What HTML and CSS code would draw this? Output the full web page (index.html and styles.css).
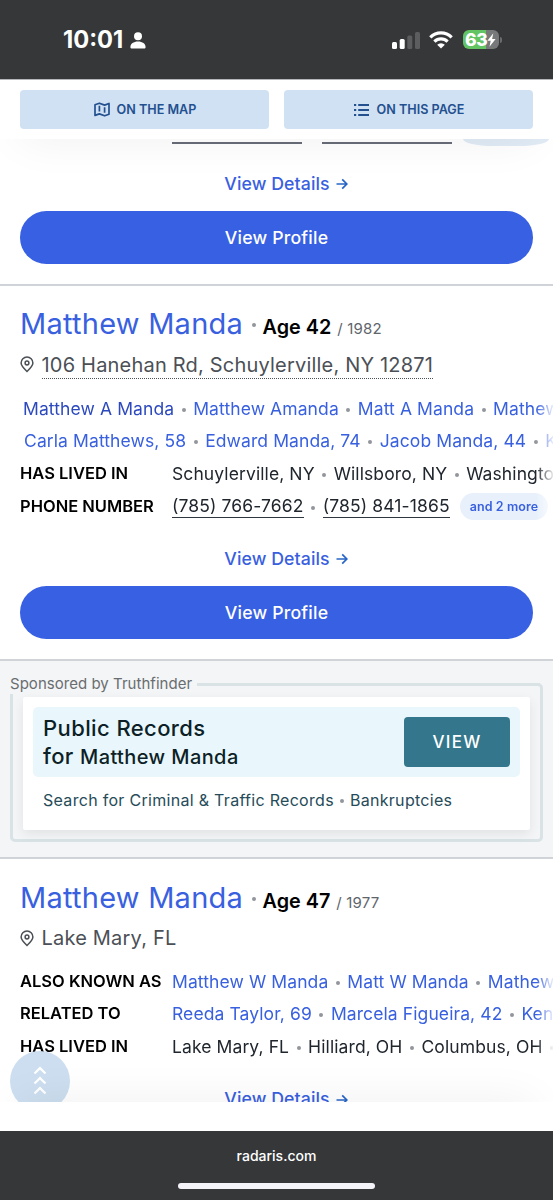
FILE: index.html
```html
<!DOCTYPE html>
<html lang="en">
<head>
<meta charset="utf-8">
<title>Radaris</title>
<link rel="stylesheet" href="styles.css">
</head>
<body>
<svg class="defs" width="0" height="0">
  <symbol id="pin" viewBox="0 0 14 17"><path d="M7 1.100a5.900 5.900 0 0 1 5.900 5.900c0 2.600-1.600 4.400-5.900 8.500C2.700 11.400 1.100 9.600 1.100 7A5.900 5.900 0 0 1 7 1.100Z" fill="none" stroke="currentColor" stroke-width="1.500"/><circle cx="7" cy="7" r="1.900" fill="none" stroke="currentColor" stroke-width="1.500"/></symbol>
  <symbol id="arrow" viewBox="0 0 12 12"><path d="M.5 6h10M6.200 1.400 10.800 6l-4.600 4.600" fill="none" stroke="currentColor" stroke-width="1.700"/></symbol>
</svg>
<header class="status">
  <span class="time">10:01</span>
  <svg class="person" width="16" height="17" viewBox="0 0 16 17"><circle cx="8" cy="4.300" r="4" fill="#fff"/><path d="M.4 15.200C.4 11.800 3.600 9.600 8 9.600s7.600 2.200 7.600 5.600c0 .9-.6 1.300-1.500 1.300H1.900c-.9 0-1.500-.4-1.500-1.300Z" fill="#fff"/></svg>
  <svg class="signal" width="28" height="18" viewBox="0 0 28 18"><rect x="0" y="11" width="5" height="7" rx="1.500" fill="#fff"/><rect x="7.700" y="8" width="5" height="10" rx="1.500" fill="#fff"/><rect x="15.300" y="4.500" width="5" height="13.500" rx="1.500" fill="#5c5d5f"/><rect x="23" y="1" width="5" height="17" rx="1.500" fill="#5c5d5f"/></svg>
  <svg class="wifi" width="24" height="18" viewBox="0 0 24 18"><g fill="none" stroke="#fff" stroke-width="3.200"><path d="M1.300 6.300a15.200 15.200 0 0 1 21.400 0"/><path d="M5.400 10.600a9.400 9.400 0 0 1 13.200 0"/></g><path d="M12 17.600 8.200 13.700a5.400 5.400 0 0 1 7.600 0Z" fill="#fff"/></svg>
  <div class="battery"><span>63</span><svg width="9" height="14" viewBox="0 0 9 14"><path d="M6.300.3.4 7.800h3.300L2.500 13.700 8.600 6H5.100Z" fill="#fff"/></svg></div>
  <i class="cap"></i>
</header>
<nav class="tabs">
  <a class="tab"><svg width="16" height="15" viewBox="0 0 16 15"><path d="M1 2.700 5.400 1.200l5.200 1.900L15 1.500v10.800l-4.400 1.500-5.200-1.900L1 13.400ZM5.400 3.700v5.700M10.600 5.300v5.500" fill="none" stroke="currentColor" stroke-width="1.700" stroke-linejoin="round"/></svg>ON THE MAP</a>
  <a class="tab list"><svg width="15" height="12" viewBox="0 0 15 12"><path d="M0 1h2.200M0 6h2.200M0 11h2.200M4.200 1H15M4.200 6H15M4.200 11H15" stroke="currentColor" stroke-width="1.800"/></svg>ON THIS PAGE</a>
</nav>
<main class="results">
  <section class="card">
    <div class="cut"><i class="line"></i><i class="line"></i><i class="blob"></i></div>
    <a class="details">View Details<svg width="12" height="12"><use href="#arrow"/></svg></a>
    <a class="profile">View Profile</a>
  </section>
  <section class="card">
    <h2 class="name">Matthew Manda<i class="dot"></i><b>Age 42</b><small>/ 1982</small></h2>
    <div class="place"><svg width="14" height="17"><use href="#pin"/></svg><span class="street">106 Hanehan Rd, Schuylerville, NY 12871</span></div>
    <div class="rows">
      <div class="row aliases link"><span class="visited">Matthew A Manda</span><i class="dot"></i><span>Matthew Amanda</span><i class="dot"></i><span>Matt A Manda</span><i class="dot"></i><span>Mathew</span></div>
      <div class="row aliases relatives link"><span>Carla Matthews, 58</span><i class="dot"></i><span>Edward Manda, 74</span><i class="dot"></i><span>Jacob Manda, 44</span><i class="dot"></i><span>K</span></div>
      <div class="row"><label>HAS LIVED IN</label><span>Schuylerville, NY</span><i class="dot"></i><span>Willsboro, NY</span><i class="dot"></i><span>Washington</span></div>
      <div class="row"><label>PHONE NUMBER</label><span class="phone">(785) 766-7662</span><i class="dot"></i><span class="phone">(785) 841-1865</span><span class="more">and 2 more</span></div>
    </div>
    <a class="details">View Details<svg width="12" height="12"><use href="#arrow"/></svg></a>
    <a class="profile">View Profile</a>
  </section>
  <aside class="sponsor">
    <fieldset>
      <legend>Sponsored by Truthfinder</legend>
      <div class="ad">
        <div class="banner"><p>Public Records<br>for <em>Matthew Manda</em></p><a class="view">VIEW</a></div>
        <div class="tags"><span>Search for Criminal &amp; Traffic Records</span><i class="dot"></i><span>Bankruptcies</span></div>
      </div>
    </fieldset>
  </aside>
  <section class="card">
    <h2 class="name">Matthew Manda<i class="dot"></i><b>Age 47</b><small>/ 1977</small></h2>
    <div class="place"><svg width="14" height="17"><use href="#pin"/></svg><span>Lake Mary, FL</span></div>
    <div class="rows">
      <div class="row link"><label>ALSO KNOWN AS</label><span>Matthew W Manda</span><i class="dot"></i><span>Matt W Manda</span><i class="dot"></i><span>Mathew</span></div>
      <div class="row link"><label>RELATED TO</label><span>Reeda Taylor, 69</span><i class="dot"></i><span>Marcela Figueira, 42</span><i class="dot"></i><span>Ken</span></div>
      <div class="row"><label>HAS LIVED IN</label><span>Lake Mary, FL</span><i class="dot"></i><span>Hilliard, OH</span><i class="dot"></i><span>Columbus, OH</span><i class="dot"></i></div>
    </div>
    <a class="details">View Details<svg width="12" height="12"><use href="#arrow"/></svg></a>
  </section>
  <a class="to-top"><svg width="14" height="30" viewBox="0 0 14 30"><path d="M1.500 7.500 7 2.200l5.500 5.300M1.500 17.500 7 12.200l5.500 5.300M1.500 27.500 7 22.200l5.500 5.300" fill="none" stroke="#fff" stroke-width="2.300"/></svg></a>
</main>
<div class="gap"></div>
<footer class="browser"><span>radaris.com</span><i class="home"></i></footer>
</body>
</html>
```
FILE: styles.css
```css
* { box-sizing: border-box; }
body { margin: 0; width: 553px; height: 1200px; overflow: hidden; display: flex; flex-direction: column; background: #fff; font-family: Inter, "Liberation Sans", sans-serif; color: #20262d; }
.defs { position: absolute; }
svg { display: block; flex: none; }
i { font-style: normal; }

.status { height: 80px; flex: none; display: flex; align-items: center; background: #363739; border-bottom: 1px solid #b4b6ba; padding: 0 51px 0 63px; color: #fff; }
.time { font-size: 23.700px; font-weight: 700; line-height: 30px; width: 67px; white-space: nowrap; margin-top: 1px; }
.person { margin-top: 1px; }
.signal { margin-left: auto; }
.wifi { margin: 0 10px 0 9px; }
.battery { width: 36px; height: 19px; display: flex; align-items: center; padding-left: 2px; border-radius: 6px; background: linear-gradient(90deg, #62c462 64%, #77787a 64%); font-weight: 800; font-size: 17.500px; letter-spacing: -.3px; }
.cap { width: 2px; height: 6px; margin-left: 1px; border-radius: 0 2px 2px 0; background: #6b6c6e; }

.tabs { height: 59px; flex: none; display: flex; gap: 15px; padding: 10px 20px; background: #fff; position: relative; z-index: 2; }
.tab { width: 249px; display: flex; align-items: center; justify-content: center; gap: 7px; padding-left: 1px; border-radius: 4px; background: #d0e1f3; color: #23508f; font-size: 12.600px; font-weight: 600; }
.tab.list { gap: 8px; }

.results { height: 963px; flex: none; overflow: hidden; position: relative; }
.results::before, .results::after { content: ""; position: absolute; z-index: 3; left: 20px; right: 20px; height: 40px; pointer-events: none; box-shadow: 0 0 46px rgba(0, 0, 0, .065); }
.results::before { top: -40px; }
.results::after { bottom: -40px; }
.card { border-bottom: 2px solid #d0d3d7; padding: 19px 20px; height: 375px; }
.card:first-child { height: 147px; padding-top: 0; }
.card:last-of-type { border: 0; padding-top: 20px; }
.cut { height: 28px; display: flex; align-items: flex-start; margin-left: 152px; }
.line { flex: none; width: 130px; height: 2px; margin: 3px 19.500px 0 0; background: #686c78; }
.blob { width: 86px; height: 7px; margin-left: -8px; flex: none; border-radius: 0 0 30px 30px / 0 0 7px 7px; background: #e1ebf6; }

.name { margin: 0; height: 38px; display: flex; align-items: baseline; color: #3860df; font-weight: 400; font-size: 29px; line-height: 38px; letter-spacing: .25px; white-space: nowrap; }
.name .dot { margin: 18px 6.500px 0 9px; align-self: flex-start; width: 4px; height: 4px; }
.name b { color: #000; font-size: 19.800px; font-weight: 600; letter-spacing: 0; }
.name small { color: #60656c; font-size: 15px; margin-left: 6px; letter-spacing: .2px; }
.place { height: 30px; margin-top: 6px; display: flex; align-items: center; gap: 7.500px; color: #4b5056; font-size: 20px; letter-spacing: .2px; white-space: nowrap; }
.place span { line-height: 25px; height: 27px; margin-top: 2px; }
.street { border-bottom: 1px dotted #4b5056; }
.card .place .street { height: 26px; margin-top: 3px; }
.rows { margin: 13px -20px 20px 0; -webkit-mask-image: linear-gradient(90deg, #000 516px, transparent 535px); mask-image: linear-gradient(90deg, #000 516px, transparent 535px); overflow: hidden; }
.card:last-of-type .rows { margin-top: 12px; }
.row { height: 32.600px; display: flex; align-items: center; white-space: nowrap; font-size: 17.500px; letter-spacing: .1px; }
.row > * { flex: none; }
.row label { width: 152px; font-size: 16.500px; font-weight: 600; color: #000; letter-spacing: 0; margin-top: -1px; }
.link { color: #3860df; }
.visited { color: #2c49be; }
.aliases { padding-left: 3px; }
.relatives { padding-left: 4px; }
.dot { flex: none; width: 4px; height: 4px; border-radius: 50%; background: #92969c; margin: 3px 7.500px 0; }
.phone { line-height: 22px; border-bottom: 1.500px solid #30363d; letter-spacing: .13px; }
.more { margin-left: 10px; height: 27px; line-height: 27px; padding: 0 10px; border-radius: 14px; background: #e7f0fb; color: #3860df; font-size: 12.500px; font-weight: 600; }
.details { display: flex; height: 32px; align-items: center; justify-content: center; gap: 6px; padding-left: 19px; font-size: 17.700px; font-weight: 450; letter-spacing: .1px; color: #3860df; }
.details svg { margin-top: 2px; color: #2865c6; }
.profile { display: flex; height: 53px; margin-top: 12px; align-items: center; justify-content: center; border-radius: 27px; background: #3860e2; color: #fff; font-size: 17.700px; font-weight: 450; letter-spacing: .2px; }

.sponsor { height: 198px; background: #f3f5f7; border-bottom: 2px solid #d0d3d7; padding: 13px 10px; }
fieldset { margin: 0; height: 168px; padding: 3px 10px 0; border: 3px solid #d9e2e5; border-radius: 5px; min-width: 0; }
legend { margin-left: -13px; padding: 0 5px 0 0; font-size: 15px; line-height: 20px; color: #6a6d70; letter-spacing: .03px; }
.ad { height: 133px; background: #fff; padding: 10px; box-shadow: 0 4px 12px rgba(0, 0, 0, .08); border-radius: 2px; }
.banner { height: 70px; padding: 0 10px; display: flex; align-items: center; justify-content: space-between; background: #e9f7fc; border-radius: 5px; }
.banner p { margin: 0; font-size: 22px; line-height: 28px; font-weight: 450; letter-spacing: .4px; color: #0d1f27; }
.banner em { font-style: normal; font-size: 20px; font-weight: 450; }
.view { width: 106px; height: 50px; border-radius: 4px; background: #34768b; color: #fff; font-size: 17px; font-weight: 450; letter-spacing: 1.200px; display: flex; align-items: center; justify-content: center; }
.tags { display: flex; align-items: center; padding: 13px 10px 0; font-size: 16px; letter-spacing: .3px; line-height: 20px; color: #264b59; white-space: nowrap; }
.tags .dot { margin: 2px 6px 0; }

.to-top { position: absolute; z-index: 2; left: 10px; top: 912px; width: 60px; height: 60px; border-radius: 50%; background: rgba(197, 217, 237, .88); display: flex; align-items: center; justify-content: center; }
.gap { height: 29px; flex: none; }
.browser { height: 69px; flex: none; background: #363739; color: #fff; display: flex; flex-direction: column; align-items: center; padding-top: 15px; font-size: 14px; font-weight: 500; line-height: 20px; }
.home { width: 197px; height: 6px; margin-top: 17px; border-radius: 3px; background: #f3f3f8; }
```
